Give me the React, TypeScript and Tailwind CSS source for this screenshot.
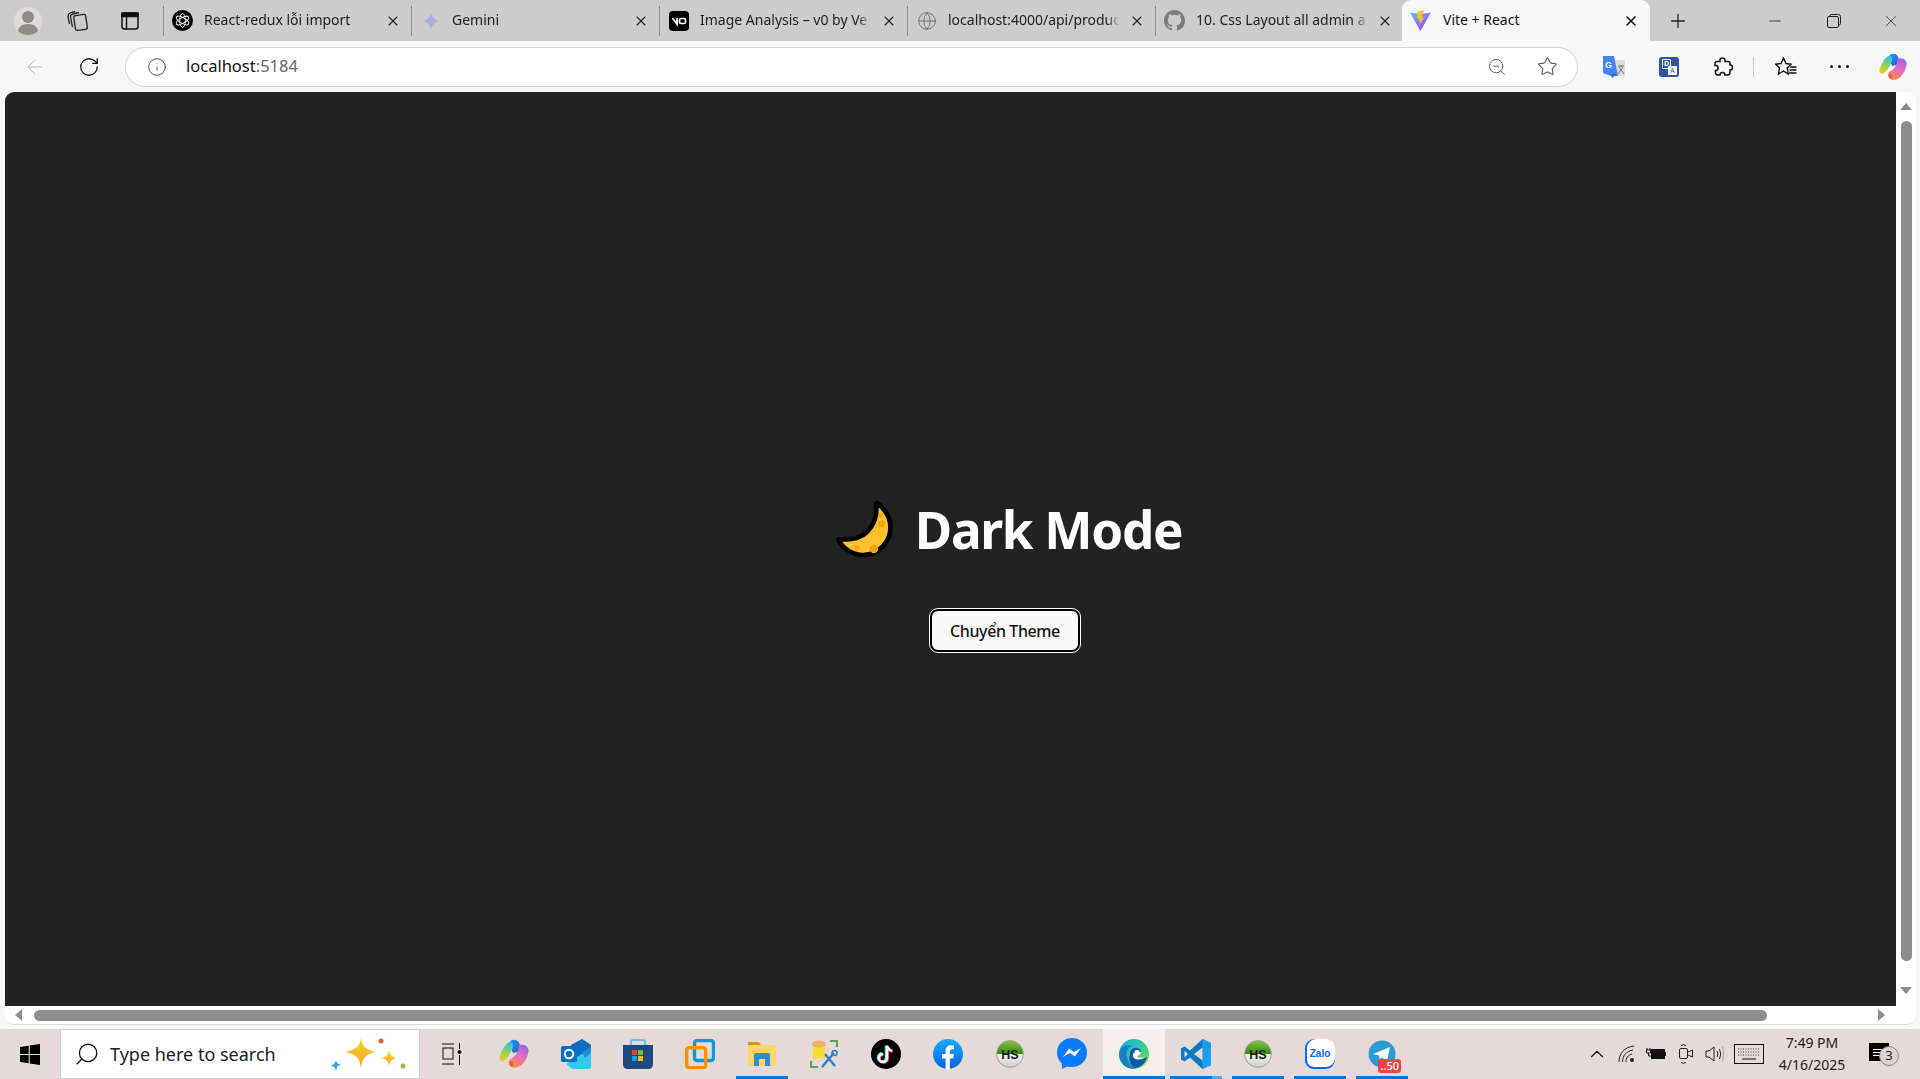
import { ArrowLeft, RotateCw, Info, ZoomOut, Star, Plus, Minus, X, Globe, Search, ChevronUp } from "lucide-react";
import type { ReactNode } from "react";

const ui = { fontFamily: '"Noto Sans", "Open Sans", sans-serif' };

type TabProps = {
  icon: ReactNode;
  title: string;
};

function Tab({ icon, title }: TabProps) {
  return (
    <div className="flex h-[41px] w-[248px] items-center pl-2 pr-[10px] text-[#222]">
      <div className="mr-2 -ml-2 h-[30px] w-px shrink-0 bg-[#8a8a8a]" />
      <span className="flex w-[21px] shrink-0 justify-center">{icon}</span>
      <span className="ml-[11px] w-[172px] whitespace-nowrap pb-[2px] text-[14px] [mask-image:linear-gradient(to_right,black_92%,transparent)]">
        {title}
      </span>
      <X size={16} strokeWidth={1.6} className="ml-auto text-[#222]" />
    </div>
  );
}

function ChatGptIcon() {
  return (
    <svg width="21" height="21" viewBox="0 0 21 21">
      <circle cx="10.5" cy="10.5" r="10.5" fill="#000" />
      <g fill="none" stroke="#fff" strokeWidth="0.9">
        <ellipse cx="10.5" cy="10.5" rx="2.8" ry="7" />
        <ellipse cx="10.5" cy="10.5" rx="2.8" ry="7" transform="rotate(60 10.5 10.5)" />
        <ellipse cx="10.5" cy="10.5" rx="2.8" ry="7" transform="rotate(120 10.5 10.5)" />
      </g>
    </svg>
  );
}

function GeminiIcon() {
  return (
    <svg width="18" height="18" viewBox="0 0 18 18">
      <defs>
        <linearGradient id="gem" x1="0" y1="1" x2="1" y2="0">
          <stop offset="0" stopColor="#8fa8e8" />
          <stop offset="1" stopColor="#c3aee0" />
        </linearGradient>
      </defs>
      <path d="M9 0 C9.6 5 13 8.4 18 9 C13 9.6 9.6 13 9 18 C8.4 13 5 9.6 0 9 C5 8.4 8.4 5 9 0Z" fill="url(#gem)" />
    </svg>
  );
}

function V0Icon() {
  return (
    <svg width="20" height="20" viewBox="0 0 20 20">
      <rect width="20" height="20" rx="4" fill="#000" />
      <path d="M3.5 7 L8 13 V7" fill="none" stroke="#fff" strokeWidth="1.8" />
      <rect x="10.5" y="7.5" width="6" height="5" rx="1.6" fill="none" stroke="#fff" strokeWidth="1.7" />
    </svg>
  );
}

function GithubIcon() {
  return (
    <svg width="21" height="21" viewBox="0 0 16 16" fill="#7c7c7c">
      <path d="M8 0C3.58 0 0 3.58 0 8c0 3.54 2.29 6.53 5.47 7.59.4.07.55-.17.55-.38 0-.19-.01-.82-.01-1.49-2.01.37-2.53-.49-2.69-.94-.09-.23-.48-.94-.82-1.13-.28-.15-.68-.52-.01-.53.63-.01 1.08.58 1.23.82.72 1.21 1.87.87 2.33.66.07-.52.28-.87.51-1.07-1.78-.2-3.64-.89-3.64-3.95 0-.87.31-1.59.82-2.15-.08-.2-.36-1.02.08-2.12 0 0 .67-.21 2.2.82.64-.18 1.32-.27 2-.27s1.36.09 2 .27c1.53-1.04 2.2-.82 2.2-.82.44 1.1.16 1.92.08 2.12.51.56.82 1.27.82 2.15 0 3.07-1.87 3.75-3.65 3.95.29.25.54.73.54 1.48 0 1.07-.01 1.93-.01 2.2 0 .21.15.46.55.38A8.01 8.01 0 0 0 16 8c0-4.42-3.58-8-8-8z" />
    </svg>
  );
}

function ViteIcon() {
  return (
    <svg width="21" height="21" viewBox="0 0 21 21">
      <defs>
        <linearGradient id="vp" x1="0" y1="0" x2="0.7" y2="1">
          <stop offset="0" stopColor="#41d1ff" />
          <stop offset="1" stopColor="#bd34fe" />
        </linearGradient>
      </defs>
      <path d="M0 2.5 L10.5 4 L21 2.5 L10.7 20.5 Q10.4 21 10 20.5Z" fill="url(#vp)" />
      <path d="M14.5 0.3 L7.5 1.6 L7.1 8.6 L9 8.2 L8.5 11 L10 10.6 L9.2 15 L14 8 L12 8.4 L12.8 5.6 L11.2 5.8Z" fill="#ffc517" />
    </svg>
  );
}

function CopilotIcon({ id, size = 28 }: { id: string; size?: number }) {
  return (
    <svg width={size} height={size} viewBox="0 0 30 30">
      <defs>
        <linearGradient id={id + "a"} x1="0" y1="0" x2="1" y2="1">
          <stop offset="0" stopColor="#1ba1f1" />
          <stop offset="1" stopColor="#2a52d8" />
        </linearGradient>
        <linearGradient id={id + "b"} x1="0.6" y1="0" x2="0.3" y2="1">
          <stop offset="0" stopColor="#2fc3e8" />
          <stop offset="0.5" stopColor="#8fd14f" />
          <stop offset="1" stopColor="#f7c832" />
        </linearGradient>
        <linearGradient id={id + "c"} x1="0.8" y1="0" x2="0.3" y2="1">
          <stop offset="0" stopColor="#9a63e8" />
          <stop offset="0.55" stopColor="#ee6fb4" />
          <stop offset="1" stopColor="#f98a3c" />
        </linearGradient>
      </defs>
      <path d="M12 1.5 C14.5 0.3 18.5 0.5 20 3.5 L23 12 L14 14 L10 5Z" fill={`url(#${id}a)`} />
      <path d="M9.5 3.5 C6 5.5 1.5 13 0.5 18 C0 22 3 23.5 5.5 21.5 C8.5 19 12 13.5 14 8 C14.5 4 12 2 9.5 3.5Z" fill={`url(#${id}b)`} />
      <path d="M20 6 C24 5 28.5 6 29.5 10.5 C30 15 26.5 23 22 26.5 C18.5 29 13.5 29.5 11.5 27 C9.5 24.5 9.5 22 11 20 C15 19 19.5 14 20 6Z" fill={`url(#${id}c)`} />
      <path d="M11 22 C14 22 15 25 13.5 28 C11 28 9 24 11 22Z" fill="#f25a3c" />
    </svg>
  );
}

function OutlookIcon() {
  return (
    <svg width="30" height="30" viewBox="0 0 30 30">
      <path d="M10 6 L21 0 L30 6 V27 Q30 30 27 30 H11 L6 26 Z" fill="#35c7ee" />
      <path d="M10 6 L21 0 L30 6 V10 L14 19 L10 14Z" fill="#0f6cbd" />
      <path d="M21 13 L30 8 V14 L24 19Z" fill="#1490df" />
      <rect x="0" y="7" width="16" height="16" rx="1.5" fill="#0a6fc8" />
      <circle cx="8" cy="15" r="4.2" fill="none" stroke="#fff" strokeWidth="2" />
    </svg>
  );
}

function StoreIcon() {
  return (
    <svg width="30" height="30" viewBox="0 0 30 30">
      <path d="M8 7 V3 Q8 1 10 1 H20 Q22 1 22 3 V7" fill="none" stroke="#5cc6ee" strokeWidth="2" />
      <path d="M0 6 H30 V25 Q30 30 25 30 H5 Q0 30 0 25Z" fill="#1d4a7e" />
      <rect x="9" y="11" width="5" height="5" fill="#e8442a" />
      <rect x="15" y="11" width="5" height="5" fill="#6fbf2c" />
      <rect x="9" y="17" width="5" height="5" fill="#14a0e6" />
      <rect x="15" y="17" width="5" height="5" fill="#fcb900" />
    </svg>
  );
}

function VmwareIcon() {
  return (
    <svg width="30" height="30" viewBox="0 0 30 30" fill="none">
      <rect x="9.5" y="1.5" width="19" height="20" rx="2.5" stroke="#1296d4" strokeWidth="3.4" />
      <rect x="1.7" y="8.7" width="19" height="20" rx="2.5" stroke="#f59300" strokeWidth="3.4" />
    </svg>
  );
}

function ExplorerIcon() {
  return (
    <svg width="28" height="24" viewBox="0 0 28 24">
      <path d="M0 1 Q0 0 1 0 H11 L13 3 H0Z" fill="#d69a11" />
      <rect x="0" y="3" width="28" height="21" rx="1" fill="#fcd669" />
      <path d="M6 24 V13 Q6 11 8 11 H20 Q22 11 22 13 V24 H17 V17 H11 V24Z" fill="#2f8ed8" />
    </svg>
  );
}

function ToolIcon() {
  return (
    <svg width="28" height="30" viewBox="0 0 28 30" fill="none">
      <path d="M20 2 H27 V8" stroke="#5aa654" strokeWidth="2.2" />
      <path d="M1 22 V28 H8" stroke="#5aa654" strokeWidth="2.2" />
      <path d="M3 5 V20 L15 19 V5Z" fill="#fbdc31" />
      <ellipse cx="9" cy="5" rx="7" ry="3.6" fill="#eab26b" />
      <path d="M12 28 L24 14 M15 15 L25 27" stroke="#2b7cc4" strokeWidth="2.2" />
      <circle cx="24.5" cy="14" r="2.5" stroke="#2b7cc4" strokeWidth="1.5" />
    </svg>
  );
}

function TiktokIcon() {
  const d = "M16 7 V19 A4 4 0 1 1 12 15 M16 7 Q17 11 21 12";
  return (
    <svg width="30" height="30" viewBox="0 0 30 30" fill="none">
      <circle cx="15" cy="15" r="15" fill="#000" />
      <path d={d} stroke="#25f4ee" strokeWidth="2.6" transform="translate(-1 -0.6)" />
      <path d={d} stroke="#fe2c55" strokeWidth="2.6" transform="translate(0.8 0.6)" />
      <path d={d} stroke="#fff" strokeWidth="2.4" />
    </svg>
  );
}

function FacebookIcon() {
  return (
    <svg width="30" height="30" viewBox="0 0 30 30">
      <defs>
        <linearGradient id="fb" x1="0" y1="0" x2="0" y2="1">
          <stop offset="0" stopColor="#18acfe" />
          <stop offset="1" stopColor="#0163e0" />
        </linearGradient>
      </defs>
      <circle cx="15" cy="15" r="15" fill="url(#fb)" />
      <path d="M12.6 30 V19.4 H9 V15 H12.6 V11.8 C12.6 8.2 14.7 6.2 18 6.2 C19.6 6.2 21 6.5 21 6.5 V10.2 H19.2 C17.4 10.2 16.9 11.3 16.9 12.4 V15 H20.9 L20.2 19.4 H16.9 V30Z" fill="#fff" />
    </svg>
  );
}

function HsIcon({ id }: { id: string }) {
  return (
    <svg width="28" height="28" viewBox="0 0 28 28">
      <defs>
        <linearGradient id={id} x1="0" y1="0" x2="0" y2="1">
          <stop offset="0" stopColor="#8cc63f" />
          <stop offset="0.5" stopColor="#2f8a12" />
          <stop offset="0.5" stopColor="#f0f0ee" />
          <stop offset="1" stopColor="#cfcfca" />
        </linearGradient>
      </defs>
      <circle cx="14" cy="14" r="13.4" fill={`url(#${id})`} stroke="#9aa39a" strokeWidth="1" />
      <text x="14" y="19" textAnchor="middle" fontFamily="Liberation Sans, sans-serif" fontWeight="700" fontSize="12.5" fill="#1a1a1a">
        HS
      </text>
    </svg>
  );
}

function MessengerIcon() {
  return (
    <svg width="30" height="31" viewBox="0 0 30 31">
      <path d="M15 0 C6.5 0 0 6.2 0 14.5 C0 18.9 1.8 22.6 4.7 25.2 L5 30.2 Q5.2 31 6 30.6 L10.3 28.4 Q12.5 29 15 29 C23.5 29 30 22.8 30 14.5 C30 6.2 23.5 0 15 0Z" fill="#0a7cff" />
      <path d="M6 19 L12 10.5 L17 14 L24 10 L18 18.5 L13 15Z" fill="#fff" />
    </svg>
  );
}

function EdgeIcon() {
  return (
    <svg width="30" height="30" viewBox="0 0 30 30">
      <defs>
        <linearGradient id="e1" x1="0" y1="0" x2="1" y2="0.7">
          <stop offset="0" stopColor="#1aa6d8" />
          <stop offset="0.55" stopColor="#2fc7b2" />
          <stop offset="1" stopColor="#6fd94f" />
        </linearGradient>
      </defs>
      <circle cx="15" cy="15" r="15" fill="url(#e1)" />
      <path d="M0 15 C1 7 8 5 13 7 C8 9 6.5 13 8 19 C9.5 24 13 28 16 29.8 C7 30.5 0 24 0 15Z" fill="#1a7fc9" />
      <path d="M11 15 C11 10 15 8 19 9 C22 10 23 13 21 14 L14 14 C13.5 17 16 19.5 20 19.5 C23 19.5 26 18.5 28 17.5 C27 24 21 29 16 29 C12 28 9 21 11 15Z" fill="#0d5aa3" />
      <path d="M15.5 12.5 C16 10.8 20 10.5 20.5 12.5 C20.5 14 18 15 15.5 15Z" fill="#fff" />
      <path d="M14 15 C15 13.5 20 13.5 22 13 C22 15 20 16 18 17.5 C20 19 24 19.5 28 17.5 C26 19 22 21 18 20.5 C15 20 13.5 17.5 14 15Z" fill="#fff" />
    </svg>
  );
}

function VscodeIcon() {
  return (
    <svg width="30" height="30" viewBox="0 0 30 30">
      <path d="M21.5 0 L30 4 V26 L21.5 30 L9 18.5 L3.5 22.5 L0 20.5 V9.5 L3.5 7.5 L9 11.5Z" fill="#0a7ac6" />
      <path d="M21.5 0 L30 4 V26 L21.5 30 Z" fill="#1f9cf0" />
      <path d="M21.5 8.5 V21.5 L13 15Z M3.5 11.5 L7 15 L3.5 18.5Z" fill="#e6dad8" />
    </svg>
  );
}

function ZaloIcon() {
  return (
    <div className="relative flex h-[30px] w-[30px] items-center justify-center rounded-[9px] bg-white shadow-[inset_2px_0_0_#0a68ff,inset_0_-2px_0_#0a68ff]">
      <span className="text-[10px] font-bold leading-none text-[#0a68ff]" style={{ fontFamily: '"Liberation Sans", sans-serif' }}>
        Zalo
      </span>
    </div>
  );
}

function TelegramIcon() {
  return (
    <div className="relative h-[28px] w-[28px]">
      <svg width="28" height="28" viewBox="0 0 28 28">
        <circle cx="14" cy="14" r="13.5" fill="#2a9bd8" />
        <path d="M5 14 L22 7 L19 21 L14 17.5 L11.5 19 L11 15.5Z" fill="#fff" />
      </svg>
      <span className="absolute bottom-[-5px] right-[-5px] rounded-[3px] bg-[#ef4444] px-[2px] text-[11px] font-medium leading-[14px] text-white">
        ..50
      </span>
    </div>
  );
}

function WindowsLogo() {
  return (
    <svg width="20" height="21" viewBox="0 0 20 21" fill="#000">
      <path d="M0 3 L8.7 1.7 V10 H0Z M9.8 1.5 L20 0 V10 H9.8Z M0 11 H8.7 V19.3 L0 18Z M9.8 11 H20 V21 L9.8 19.5Z" />
    </svg>
  );
}

function Sparkles() {
  return (
    <svg width="80" height="36" viewBox="0 0 80 36">
      <defs>
        <linearGradient id="sp" x1="0" y1="0" x2="0" y2="1">
          <stop offset="0" stopColor="#fdd42f" />
          <stop offset="1" stopColor="#f5a623" />
        </linearGradient>
      </defs>
      <path d="M30 2 C31.5 10 34 13 44 16 C34 19 31.5 22 30 32 C28.5 22 26 19 15 16 C26 13 28.5 10 30 2Z" fill="url(#sp)" />
      <path d="M58 14 C59 19 60 20 65 22 C60 24 59 25 58 30 C57 25 56 24 51 22 C56 20 57 19 58 14Z" fill="url(#sp)" />
      <path d="M5 24 C5.6 27 7 28 10 29 L6.5 30 L5 35 L3.5 31 L0 29.5 C3 28.5 4.4 27 5 24Z" fill="#29a8ee" />
      <circle cx="50" cy="5" r="2.5" fill="#ea5f2b" />
      <circle cx="72" cy="30" r="2.5" fill="#8cc63f" />
    </svg>
  );
}

function Slot({ children, lit, active, tail }: { children: ReactNode; lit?: boolean; active?: boolean; tail?: boolean }) {
  return (
    <div className={active ? "relative flex h-[50px] w-[62px] items-center justify-center bg-[#f4efed]" : "relative flex h-[50px] w-[62px] items-center justify-center"}>
      <div className="-mt-[1px] flex items-center justify-center">{children}</div>
      {lit && <div className={active ? "absolute inset-x-0 bottom-0 h-[3px] bg-[#0078d4]" : "absolute inset-x-[5px] bottom-0 h-[3px] bg-[#0078d4]"} />}
      {tail && <div className="absolute bottom-0 right-[5px] h-[3px] w-[10px] bg-[#5aa6e0]" />}
    </div>
  );
}

function App() {
  return (
    <div className="flex h-[1079px] w-[1920px] flex-col overflow-hidden bg-[#f7f7f7]" style={ui}>
      {/* Tabs */}
      <div className="flex h-[41px] shrink-0 items-center bg-[#cccccc]">
        <div className="flex h-full w-[163px] shrink-0 items-center">
          <div className="ml-[14px] flex h-[28px] w-[28px] items-center justify-center overflow-hidden rounded-full bg-[#dfdcd6]">
            <svg width="28" height="28" viewBox="0 0 28 28" fill="#8f8c86">
              <circle cx="14" cy="10" r="6" />
              <path d="M3 28 C3 20 8 17 14 17 C20 17 25 20 25 28Z" />
            </svg>
          </div>
          <svg className="ml-[25px]" width="22" height="22" viewBox="0 0 22 22" fill="none" stroke="#222" strokeWidth="1.3">
            <rect x="7.5" y="5" width="12" height="15" rx="2" transform="rotate(-8 13 12)" />
            <path d="M5.5 17 L3.5 7 Q3.3 4.5 6 4 L12 2.5" />
            <path d="M2.5 14 L1 7 Q1 3.5 4 2.5 L8 1.5" />
          </svg>
          <svg className="ml-[32px]" width="18" height="18" viewBox="0 0 18 18" fill="none" stroke="#111" strokeWidth="1.5">
            <rect x="1" y="1" width="16" height="16" rx="2.5" />
            <rect x="1" y="1" width="16" height="3.5" fill="#111" />
            <path d="M5.5 4 V17" />
          </svg>
        </div>
        <Tab icon={<ChatGptIcon />} title="React-redux lỗi import" />
        <Tab icon={<GeminiIcon />} title="Gemini" />
        <Tab icon={<V0Icon />} title="Image Analysis – v0 by Ve" />
        <Tab icon={<Globe size={20} strokeWidth={1} className="text-[#666]" />} title="localhost:4000/api/produc" />
        <Tab icon={<GithubIcon />} title="10. Css Layout all admin a" />
        <div className="-ml-px flex h-[41px] w-[248px] shrink-0 items-center rounded-t-[9px] bg-[#f7f7f7] pl-2 pr-[11px] text-[#111]">
          <span className="flex w-[21px] shrink-0 justify-center"><ViteIcon /></span>
          <span className="ml-[12px] w-[172px] truncate pb-[2px] text-[14px]">Vite + React</span>
          <X size={16} strokeWidth={2} className="ml-auto text-black" />
        </div>
        <Plus size={22} strokeWidth={1.4} className="ml-[17px] text-[#222]" />
        <div className="ml-auto flex items-center pr-[20px]">
          <Minus size={18} strokeWidth={1.1} className="mr-[2px] text-[#222]" />
          <svg className="ml-[41px]" width="14" height="14" viewBox="0 0 14 14" fill="none" stroke="#222" strokeWidth="1">
            <rect x="0.5" y="2.5" width="11" height="11" rx="1.5" />
            <path d="M3 2.5 V2 Q3 0.5 4.5 0.5 H11.5 Q13.5 0.5 13.5 2.5 V9.5 Q13.5 11 11.5 11" />
          </svg>
          <X size={18} strokeWidth={1} className="ml-[41px] text-[#222]" />
        </div>
      </div>

      {/* Toolbar */}
      <div className="flex h-[51px] shrink-0 items-center text-[#222]">
        <ArrowLeft size={24} strokeWidth={1} className="ml-[23px] text-[#bdbdbd]" />
        <RotateCw size={22} strokeWidth={1.4} className="ml-[31px] text-[#111]" />
        <div className="ml-[25px] flex h-[40px] w-[1453px] items-center rounded-full border border-[#d4d4d4] bg-white">
          <Info size={20} strokeWidth={1} className="ml-[21px] text-[#333]" />
          <span className="ml-[19px] text-[16.5px] text-[#111]">
            localhost<span className="text-[#666]">:5184</span>
          </span>
          <ZoomOut size={20} strokeWidth={1.2} className="ml-auto text-[#666]" />
          <Star size={21} strokeWidth={1.2} className="ml-[30px] mr-[19px] text-[#555]" />
        </div>
        <svg className="ml-[25px]" width="22" height="22" viewBox="0 0 22 22">
          <rect x="9" y="4" width="13" height="16" fill="#dcdcdc" />
          <path d="M0 0 H11 L15 20 H8 L0 17Z" fill="#4285f4" />
          <path d="M8 18 L14 18 L9 22Z" fill="#3367d6" />
          <text x="5.5" y="12" textAnchor="middle" fontFamily="Liberation Sans, sans-serif" fontSize="9" fontWeight="700" fill="#fff">G</text>
          <path d="M15 10 H21 M18 9 V11 M20 11 L15 18 M16 11 L21 18" stroke="#777" strokeWidth="1" />
        </svg>
        <div className="relative ml-[34px] h-[20px] w-[20px] rounded-[3px] bg-[#2f55a4]">
          <div className="absolute left-[3px] top-[2px] flex h-[10px] w-[9px] items-center justify-center rounded-[1px] border border-white text-[7px] font-bold leading-none text-white">D</div>
          <div className="absolute bottom-[2px] right-[2px] flex h-[9px] w-[9px] items-center justify-center rounded-[1px] bg-white text-[7px] leading-none text-[#2f55a4]">A</div>
        </div>
        <svg className="ml-[34px]" width="20" height="20" viewBox="0 0 20 20" fill="none" stroke="#111" strokeWidth="1.5">
          <path d="M7 3 Q7 1 9.5 1 Q12 1 12 3 V4.5 H15 Q17 4.5 17 6.5 V8 H17.5 Q19.5 8 19.5 10.5 Q19.5 13 17.5 13 H17 V15 Q17 18 14.5 18 H12 Q12 15.5 9.5 15.5 Q7 15.5 7 18 H5 Q2.5 18 2.5 15.5 V13.5 H3 Q5 13.5 5 11 Q5 8.5 3 8.5 H2 V6.5 Q2 4.5 4 4.5 H7Z" />
        </svg>
        <div className="ml-[20px] h-[20px] w-px bg-[#c8c8c8]" />
        <svg className="ml-[21px]" width="22" height="20" viewBox="0 0 22 20" fill="none" stroke="#111" strokeWidth="1.4">
          <path d="M8.5 1 L11 6.5 L16 7.2 L12.3 11 L13.2 17 L8.5 14 L3.5 17 L4.5 11 L0.8 7.2 L6 6.5Z" />
          <path d="M15 10 H21.5 M14.5 13 H21.5 M14 16 H21.5" />
        </svg>
        <div className="ml-[33px] flex items-center gap-[3px]">
          <span className="h-[3px] w-[3px] rounded-full bg-[#111]" />
          <span className="mx-[2px] h-[3px] w-[3px] rounded-full bg-[#111]" />
          <span className="h-[3px] w-[3px] rounded-full bg-[#111]" />
        </div>
        <div className="ml-[30px]">
          <CopilotIcon id="cpa" />
        </div>
      </div>

      {/* Page + scrollbars */}
      <div className="flex h-[937px] shrink-0 flex-col pb-[4px] pl-[5px] pr-[4px]">
        <div className="flex h-[914px] shrink-0">
          <main className="w-[1891px] overflow-hidden rounded-tl-[9px] bg-[#222222] text-white">
            <div className="flex w-[2000px] flex-col items-center pt-[409px]">
              <h1 className="ml-[5px] flex h-[56px] items-center text-[51.2px] font-bold leading-[56px] tracking-[-1.3px]">
                <svg className="mr-[20px] shrink-0" width="62" height="60" viewBox="100 60 185 180">
                  <path
                    d="M228 76 C236 125 205 175 155 180 C140 182 128 182 116 181 C125 205 155 228 190 228 C240 228 272 185 272 145 C272 115 255 90 232 72Z"
                    fill="#fdc02f"
                    stroke="#000"
                    strokeWidth="14"
                    strokeLinejoin="round"
                  />
                  <circle cx="243" cy="110" r="7" fill="#eda600" />
                  <circle cx="245" cy="134" r="10" fill="#eda600" />
                  <circle cx="172" cy="207" r="8" fill="#eda600" />
                  <circle cx="222" cy="210" r="13" fill="#eda600" />
                </svg>
                Dark Mode
              </h1>
              <button className="mt-[52px] h-[43px] w-[150px] rounded-[8px] border-2 border-black bg-[#f9f9f9] text-[16px] font-medium tracking-[-0.4px] text-[#111] outline outline-1 outline-white">
                Chuyển Theme
              </button>
            </div>
          </main>
          <div className="flex w-[20px] flex-col items-center rounded-tr-[9px] bg-white pt-[11px]">
            <div className="h-0 w-0 border-x-[6px] border-b-[7px] border-x-transparent border-b-[#8d8d8d]" />
            <div className="mt-[11px] h-[840px] w-[11px] rounded-full bg-[#8d8d8d]" />
            <div className="mt-[26px] h-0 w-0 border-x-[6px] border-t-[7px] border-x-transparent border-t-[#8d8d8d]" />
          </div>
        </div>
        <div className="flex h-[19px] shrink-0 items-center rounded-b-[9px] border-b border-[#dcdcdc] bg-white">
          <div className="ml-[10px] h-0 w-0 border-y-[6px] border-r-[7px] border-y-transparent border-r-[#8d8d8d]" />
          <div className="ml-[12px] h-[11px] w-[1733px] rounded-full bg-[#8d8d8d]" />
          <div className="ml-[111px] h-0 w-0 border-y-[6px] border-l-[7px] border-y-transparent border-l-[#8d8d8d]" />
        </div>
      </div>

      {/* Taskbar */}
      <div className="flex h-[50px] shrink-0 items-center bg-[#e6dad8]">
        <div className="flex w-[60px] shrink-0 justify-center">
          <WindowsLogo />
        </div>
        <div className="flex h-[50px] w-[360px] shrink-0 items-center border border-[#cfcfcf] bg-white pl-[13px]">
          <Search size={26} strokeWidth={1.2} className="-scale-x-100 text-[#111]" />
          <span className="ml-[10px] text-[18px] text-[#222]">Type here to search</span>
          <div className="ml-auto mr-[8px]">
            <Sparkles />
          </div>
        </div>
        <div className="ml-px flex">
          <Slot>
            <svg width="22" height="22" viewBox="0 0 22 22" fill="none" stroke="#111" strokeWidth="1">
              <path d="M1 1 H13 M1 21 H13" />
              <rect x="2" y="5" width="10" height="11" />
              <path d="M18.5 0 V6 M18.5 12 V22" />
              <circle cx="18.5" cy="9" r="1.5" fill="#111" />
            </svg>
          </Slot>
          <Slot><CopilotIcon id="cpb" size={30} /></Slot>
          <Slot><OutlookIcon /></Slot>
          <Slot><StoreIcon /></Slot>
          <Slot><VmwareIcon /></Slot>
          <Slot lit><ExplorerIcon /></Slot>
          <Slot><ToolIcon /></Slot>
          <Slot><TiktokIcon /></Slot>
          <Slot><FacebookIcon /></Slot>
          <Slot><HsIcon id="hsa" /></Slot>
          <Slot><MessengerIcon /></Slot>
          <Slot lit active><EdgeIcon /></Slot>
          <Slot lit tail><VscodeIcon /></Slot>
          <Slot lit><HsIcon id="hsb" /></Slot>
          <Slot lit><ZaloIcon /></Slot>
          <Slot lit><TelegramIcon /></Slot>
        </div>
        <div className="ml-auto flex items-center pr-[31px]">
          <ChevronUp size={22} strokeWidth={1.2} className="text-[#111]" />
          <svg className="ml-[10px]" width="18" height="18" viewBox="0 0 18 18" fill="none" stroke="#222" strokeWidth="1">
            <path d="M1 17 C1 9 6 2 16 1 M4.5 17 C4.5 11 8 6 15 5 M8 17 C8 13 10 10 14 9" />
            <circle cx="14" cy="15" r="2" fill="#222" stroke="none" />
          </svg>
          <svg className="ml-[10px]" width="20" height="14" viewBox="0 0 20 14">
            <rect x="5.5" y="2.5" width="13" height="9" fill="#111" stroke="#111" strokeWidth="1" />
            <rect x="19" y="5" width="1" height="4" fill="#111" />
            <path d="M1 1 V3 M4 1 V3 M0.5 3 H4.5 V6 H0.5Z M2.5 6 V9 H5" fill="none" stroke="#111" strokeWidth="1" />
          </svg>
          <svg className="ml-[13px]" width="14" height="20" viewBox="0 0 14 20" fill="none" stroke="#222" strokeWidth="1">
            <rect x="0.5" y="4.5" width="8" height="10" rx="1.5" />
            <path d="M9 8 L13.5 6 V13 L9 11" />
            <path d="M2 1.5 Q4.5 0 7 1.5 M2 18.5 Q4.5 20 7 18.5" />
          </svg>
          <svg className="ml-[12px]" width="20" height="20" viewBox="0 0 20 20" fill="none" stroke="#222" strokeWidth="1">
            <path d="M1 7 H4 L9 3 V17 L4 13 H1Z" />
            <path d="M12 7 Q14 10 12 13 M14.5 5 Q17 10 14.5 15" />
            <path d="M17.5 2 Q20 10 17.5 18" stroke="#aaa" />
          </svg>
          <svg className="ml-[9px]" width="30" height="20" viewBox="0 0 30 20" fill="none" stroke="#111" strokeWidth="1">
            <rect x="0.5" y="0.5" width="29" height="19" />
            <path d="M4 5 H26 M4 8 H26 M4 11 H26" strokeDasharray="1 1.5" stroke="#333" />
            <path d="M8 15 H22" />
          </svg>
          <div className="ml-[14px] flex w-[68px] flex-col items-center text-[14px] leading-[22px] text-[#222]">
            <span>7:49 PM</span>
            <span>4/16/2025</span>
          </div>
          <div className="relative ml-[23px] h-[22px] w-[20px]">
            <div className="flex h-[18px] w-[20px] flex-col items-center justify-center gap-[2px] bg-black">
              <span className="h-px w-[12px] bg-white" />
              <span className="h-px w-[12px] bg-white" />
              <span className="h-px w-[12px] bg-white" />
            </div>
            <div className="absolute right-[-10px] top-[3px] flex h-[20px] w-[20px] items-center justify-center rounded-full border border-[#888] bg-[#dcd2d0] text-[13px] text-[#222]">
              3
            </div>
          </div>
        </div>
      </div>
    </div>
  );
}

export default App;
